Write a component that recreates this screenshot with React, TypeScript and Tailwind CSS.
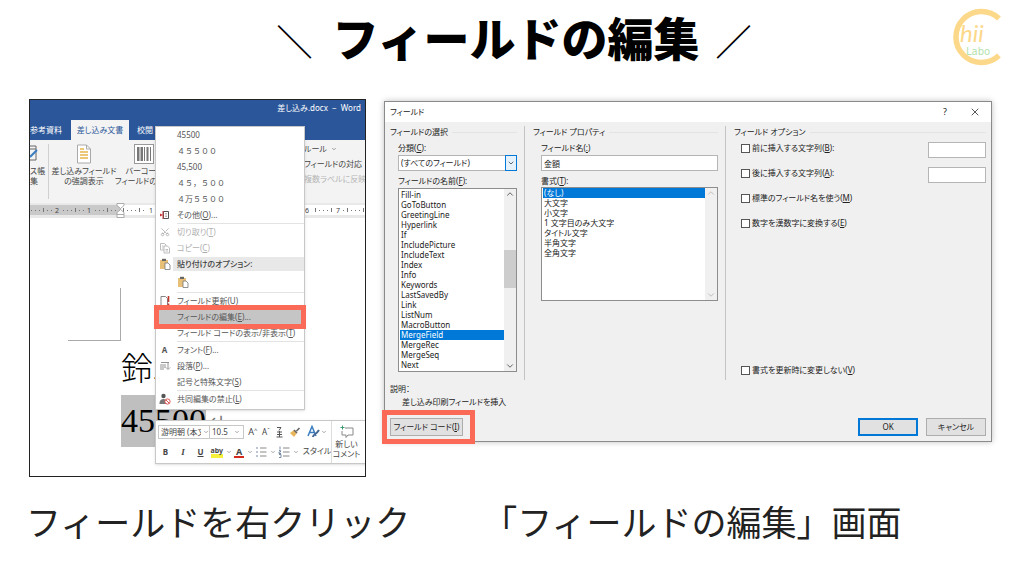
import { useState, type ReactNode } from "react";
import clsx from "clsx";
import { ChevronDown, ChevronUp, Scissors, X } from "lucide-react";

const FIELD_NAMES = [
  "Fill-in",
  "GoToButton",
  "GreetingLine",
  "Hyperlink",
  "If",
  "IncludePicture",
  "IncludeText",
  "Index",
  "Info",
  "Keywords",
  "LastSavedBy",
  "Link",
  "ListNum",
  "MacroButton",
  "MergeField",
  "MergeRec",
  "MergeSeq",
  "Next",
];

const FORMATS = [
  "(なし)",
  "大文字",
  "小文字",
  "1 文字目のみ大文字",
  "タイトル文字",
  "半角文字",
  "全角文字",
];

// "分類(C):" with the access key underlined
function Access({ text, k, end = "" }: { text: string; k: string; end?: string }) {
  return (
    <>
      {text}(<span className="underline underline-offset-1">{k}</span>){end}
    </>
  );
}

function Logo() {
  return (
    <svg viewBox="0 0 60 64" className="absolute right-4 top-1 h-16 w-[60px]" aria-label="Chii Labo">
      <path
        d="M51 14.500 A25.500 25.500 0 1 0 51 51.500"
        fill="none"
        stroke="#fcd88a"
        strokeWidth="5.500"
      />
      <text x="12" y="38" fontFamily="Lato" fontStyle="italic" fontSize="24" fill="#fcd88a">
        hii
      </text>
      <text x="18" y="51" fontFamily="DejaVu Sans" fontSize="10" fill="#b5e2ad">
        Labo
      </text>
    </svg>
  );
}

function ClipboardIcon() {
  return (
    <svg viewBox="0 0 12 12" className="size-3">
      <rect x="1" y="2" width="8" height="9" fill="#e8bf76" />
      <rect x="3" y="0.8" width="4" height="2.2" fill="#666" />
      <path d="M6 5h3l2 2v4.5H6z" fill="#fff" stroke="#777" strokeWidth="0.8" />
    </svg>
  );
}

function CopyIcon() {
  return (
    <svg viewBox="0 0 12 12" className="size-3" fill="#fff" stroke="#b5b5b5" strokeWidth="0.9">
      <path d="M1.5 1.5h4l1.5 1.5v5h-5.500z" />
      <path d="M5 4h3.500l2 2v5h-5.500z" />
      <path d="M3 4h1.500M3 6h1.500M6.500 7.500h2.500M6.500 9h2.500" />
    </svg>
  );
}

function OtherIcon() {
  return (
    <svg viewBox="0 0 12 12" className="size-3" fill="none">
      <path d="M4.500 2.500h5v7h-5z" stroke="#555" />
      <path d="M6 4.500h2M6 6h2M6 7.500h2" stroke="#999" strokeWidth="0.7" />
      <path d="M1 4.500l3 1.500-3 1.500z" fill="#c33" />
      <path d="M4 2v8" stroke="#b33" />
    </svg>
  );
}

function UpdateIcon() {
  return (
    <svg viewBox="0 0 12 12" className="size-3" fill="none">
      <path d="M2 11V1.500h4.500l2 2V11" stroke="#777" strokeWidth="0.9" />
      <path d="M9.500 1v6M9.500 8.500v1.500" stroke="#c0392b" strokeWidth="1.600" />
    </svg>
  );
}

function ParagraphIcon() {
  return (
    <svg viewBox="0 0 12 12" className="size-3" fill="none" stroke="#888" strokeWidth="0.9">
      <path d="M2 2.500h8M1 5h6M1 7h6M1 9h4M9 2.500v6M7 7.500l2 2 2-2" />
    </svg>
  );
}

function BlockUserIcon() {
  return (
    <svg viewBox="0 0 12 12" className="size-3">
      <circle cx="4.500" cy="3" r="2.200" fill="#555" />
      <path d="M0.500 10c0-5 7-5 7.500-1v2H0.500z" fill="#777" />
      <circle cx="8.500" cy="8.500" r="2.600" fill="#fff" stroke="#d9534f" />
      <path d="M6.800 6.800l3.400 3.400" stroke="#d9534f" />
    </svg>
  );
}

function MenuItem({
  icon,
  disabled,
  active,
  wide,
  children,
}: {
  icon?: ReactNode;
  disabled?: boolean;
  active?: boolean;
  wide?: boolean;
  children: ReactNode;
}) {
  return (
    <button
      role="menuitem"
      disabled={disabled}
      className={clsx(
        "flex h-4 w-full items-center whitespace-nowrap text-left",
        disabled ? "text-[#b0b0b0]" : "text-[#555]",
        active && "bg-[#c5c5c5] text-[#333]",
        wide && "[font-feature-settings:normal]",
      )}
    >
      <span className="flex w-[21px] shrink-0 justify-center pr-1">{icon}</span>
      {children}
    </button>
  );
}

function Separator() {
  return <div className="ml-[21px] h-px bg-[#e3e3e3]" />;
}

function ContextMenu() {
  return (
    <div
      role="menu"
      className="absolute left-[125px] top-[26px] w-[150px] border border-[#c8c8c8] bg-white pb-0.5 text-[8px] shadow-sm"
    >
      <MenuItem>45500</MenuItem>
      <MenuItem wide>４５５００</MenuItem>
      <MenuItem>45,500</MenuItem>
      <MenuItem wide>４５，５００</MenuItem>
      <MenuItem wide>４万５５００</MenuItem>
      <MenuItem icon={<OtherIcon />}>
        <Access text="その他" k="O" end="..." />
      </MenuItem>
      <Separator />
      <MenuItem disabled icon={<Scissors className="size-2.5 -rotate-90" />}>
        <Access text="切り取り" k="T" />
      </MenuItem>
      <MenuItem disabled icon={<CopyIcon />}>
        <Access text="コピー" k="C" />
      </MenuItem>
      <div className="flex h-4 items-center">
        <span className="flex w-[17px] justify-center">
          <ClipboardIcon />
        </span>
        <span className="flex h-3.5 flex-1 items-center bg-[#e8e8e8] pl-1 font-medium text-[#444]">
          貼り付けのオプション:
        </span>
      </div>
      <button aria-label="貼り付け" className="flex h-5 items-center pl-[21px]">
        <ClipboardIcon />
      </button>
      <Separator />
      <MenuItem icon={<UpdateIcon />}>
        <Access text="フィールド更新" k="U" />
      </MenuItem>
      <div className="relative">
        <MenuItem active>
          <Access text="フィールドの編集" k="E" end="..." />
        </MenuItem>
        <span className="pointer-events-none absolute -inset-x-0.5 -inset-y-1 border-[5px] border-[#fb6a57]" />
      </div>
      <MenuItem>
        <Access text="フィールド コードの表示/非表示" k="T" />
      </MenuItem>
      <Separator />
      <MenuItem icon={<b>A</b>}>
        <Access text="フォント" k="F" end="..." />
      </MenuItem>
      <MenuItem icon={<ParagraphIcon />}>
        <Access text="段落" k="P" end="..." />
      </MenuItem>
      <MenuItem>
        <Access text="記号と特殊文字" k="S" />
      </MenuItem>
      <Separator />
      <MenuItem icon={<BlockUserIcon />}>
        <Access text="共同編集の禁止" k="L" />
      </MenuItem>
    </div>
  );
}

function ListIcon({ numbered }: { numbered?: boolean }) {
  return (
    <svg viewBox="0 0 12 12" className="size-3" stroke="#888" fill="none">
      <path d="M5 2h6.500M5 6h6.500M5 10h6.500" />
      <path
        d={numbered ? "M2 0.500v3M1 4.500h1.500v1.500h-1.500v1.500h2M1 8.500h2v3h-2" : "M1 2h2M1 6h2M1 10h2"}
        stroke="#7a8ba5"
      />
    </svg>
  );
}

function MiniToolbar() {
  const chevron = <ChevronDown className="size-1.5 text-[#555]" />;
  return (
    <div className="absolute left-[125px] -right-1 top-[320px] flex h-11 border border-[#c8c8c8] bg-white text-[8px] text-[#444] shadow-sm">
      <div className="flex w-[147px] shrink-0 flex-col justify-between pb-1 pl-0.5 pt-1">
        <div className="flex items-center">
          <div className="relative flex items-center">
            <select
              aria-label="フォント"
              className="h-3.5 w-[52px] appearance-none border border-[#c8c8c8] pl-0.5"
            >
              <option>游明朝 (本文</option>
            </select>
            <span className="absolute right-px bg-white py-0.5 pl-0.5">{chevron}</span>
          </div>
          <div className="relative flex items-center">
            <select
              aria-label="フォント サイズ"
              className="h-3.5 w-[34px] appearance-none border border-l-0 border-[#c8c8c8] pl-0.5"
            >
              <option>10.5</option>
            </select>
            <span className="absolute right-1">{chevron}</span>
          </div>
          <div className="flex flex-1 items-center justify-around pl-0.5">
            <button className="text-[9px]">A<sup className="text-[6px]">^</sup></button>
            <button className="text-[8px]">A<sup className="text-[6px]">ˇ</sup></button>
            <button aria-label="ルビ">
              <svg viewBox="0 0 10 12" className="h-3 w-2.5" fill="none" stroke="#555">
                <path d="M3 1.500h4L5 4.500M3 6h5M3 8.500h5M5.500 5v6M2.500 11h6" />
              </svg>
            </button>
            <button aria-label="書式のコピー">
              <svg viewBox="0 0 12 12" className="size-3">
                <path d="M1 7l4-3 3 3-3 4z" fill="#e8b55c" />
                <path d="M5 4l3 3M7.500 5l3-3" stroke="#666" strokeWidth="1.600" />
              </svg>
            </button>
          </div>
        </div>
        <div className="flex items-center justify-between pr-1">
          <button className="w-[15px] font-bold">B</button>
          <button className="w-[15px] font-['Liberation_Serif'] text-[9px] font-bold italic">I</button>
          <button className="w-[15px] font-bold underline">U</button>
          <button className="border-b-4 border-[#f6f03a] text-[7px] font-bold leading-[7px]">aby</button>
          {chevron}
          <button className="border-b-2 border-[#d42a1c] px-0.5 text-[9px] font-bold leading-[9px]">A</button>
          {chevron}
          <button aria-label="箇条書き"><ListIcon /></button>
          {chevron}
          <button aria-label="段落番号"><ListIcon numbered /></button>
          {chevron}
        </div>
      </div>
      <button className="flex w-7 shrink-0 flex-col items-center justify-between whitespace-nowrap pb-1.5 pt-1">
        <span className="flex items-center">
          <svg viewBox="0 0 14 14" className="size-3.5" fill="none">
            <path d="M1 11L5 1.500L9 11M2.500 7.500h5" stroke="#3b7dc0" strokeWidth="1.500" />
            <path d="M6 12c0-3 3-2 6-7" stroke="#44688f" strokeWidth="2" />
          </svg>
          {chevron}
        </span>
        スタイル
      </button>
      <button className="flex w-[30px] shrink-0 flex-col items-center whitespace-nowrap border-l border-[#ddd] pt-1 leading-[10px]">
        <svg viewBox="0 0 14 14" className="size-3.5 shrink-0" fill="none">
          <path d="M5 3h8v7H8l-2 2.500V10H2V6" stroke="#888" />
          <path d="M2.500 0.500v4M0.500 2.500h4" stroke="#3d9a6c" />
        </svg>
        <span>
          新しい
          <br />
          コメント
        </span>
      </button>
    </div>
  );
}

const RULER = [
  { x: 27, label: "2" },
  { x: 59, label: "1" },
  { x: 121, label: "1" },
  { x: 277, label: "6" },
  { x: 308, label: "7" },
];

function Ruler() {
  return (
    <svg className="block h-[15px] w-full" aria-hidden="true">
      <rect y="2" width="91" height="10" fill="#c9c9c9" />
      <rect x="91" y="2" width="400" height="10" fill="#fff" />
      {Array.from({ length: 90 }, (_, i) => 1 + i * 4).map((x, i) =>
        RULER.some((r) => Math.abs(r.x - x) < 5) ? null : (
          <rect key={x} x={x} y={i % 4 === 3 ? 5 : 7} width="1" height={i % 4 === 3 ? 4 : 1} fill="#777" />
        ),
      )}
      {RULER.map((r) => (
        <text key={r.x} x={r.x} y="10" textAnchor="middle" fontSize="7" fill="#444">
          {r.label}
        </text>
      ))}
      <path d="M87 0.500h7v2l-3.500 3-3.500-3zM87 14.500v-5l3.500-3 3.500 3v5zM87 11.500h7" fill="#fff" stroke="#999" strokeWidth="0.800" />
    </svg>
  );
}

function WordWindow() {
  return (
    <section className="relative overflow-hidden border border-[#222] bg-white text-[8px] text-[#444]">
      <div className="flex h-10 flex-col justify-between bg-[#2b579a] text-white">
        <p className="pr-1 pt-0.5 text-right leading-3">差し込み.docx&nbsp; −&nbsp; Word</p>
        <nav className="flex h-5 items-center whitespace-nowrap">
          <button className="w-[41px] text-left">参考資料</button>
          <button className="h-full w-[58px] bg-[#f3f3f3] text-[#2b579a]">差し込み文書</button>
          <button className="pl-2">校閲</button>
        </nav>
      </div>

      <div className="flex h-[63px] whitespace-nowrap bg-[#f3f3f3] leading-[10px]">
        <button className="my-1 flex w-[19px] flex-col items-start border-r border-[#d0d0d0] text-left">
          <svg viewBox="0 0 10 20" className="h-5 w-2.5" fill="none">
            <path d="M0 2h6v14H0M0 5h6" stroke="#666" />
            <path d="M0 13l7-7" stroke="#3b7dc0" strokeWidth="2" />
          </svg>
          <span className="pt-0.5">
            ス帳
            <br />集
          </span>
        </button>
        <button className="flex w-[70px] flex-col items-center pt-1">
          <svg viewBox="0 0 16 20" className="h-5 w-4" fill="none">
            <path d="M1.500 1h9l4 4v14h-13z" fill="#fff" stroke="#aaa" />
            <path d="M10.500 1v4h4" stroke="#aaa" />
            <path d="M4 5h4M4 8h8M4 11h8M4 14h8" stroke="#e8b84b" strokeWidth="1.500" />
          </svg>
          <span className="pt-0.5">
            差し込みフィールド
            <br />
            の強調表示
          </span>
        </button>
        <button className="flex w-[50px] flex-col items-center pt-1">
          <svg viewBox="0 0 20 20" className="size-5">
            <rect x="0.500" y="0.500" width="19" height="19" fill="#fff" stroke="#999" />
            <path d="M4 3v14M8 3v14M13.500 3v14" stroke="#777" strokeWidth="2" />
            <path d="M6 3v14M10.500 3v14M16.500 3v14" stroke="#777" />
          </svg>
          <span className="pt-0.5">
            バーコード
            <br />
            フィールドの挿入
          </span>
        </button>
        <div className="ml-auto flex w-[61px] flex-col items-start gap-[5px] pt-1">
          <button className="flex items-center gap-1">
            ルール <ChevronDown className="size-1.5" />
          </button>
          <button>フィールドの対応</button>
          <button disabled className="text-[#b5b5b5]">
            複数ラベルに反映
          </button>
        </div>
      </div>

      <div className="bg-[#e9e9e9]">
        <Ruler />
      </div>

      <div className="h-[258px] pl-[38px] pt-[70px] text-black">
        <div className="h-[53px] w-[53px] border-b border-r border-[#aaa]" />
        <div className="pl-[53px] font-['Liberation_Serif','Noto_Sans_CJK_JP',serif] font-light">
          <p className="pt-2 text-[32px] leading-10">鈴木</p>
          <p className="mt-1.5 flex items-center whitespace-nowrap text-[34px] leading-[52px]">
            <span className="bg-[#bfbfbf]">45500</span>
            <span className="pl-1 text-lg text-[#777]">↵</span>
          </p>
        </div>
      </div>

      <ContextMenu />
      <MiniToolbar />
    </section>
  );
}

function GroupTitle({ children }: { children: ReactNode }) {
  return (
    <h3 className="flex h-3 items-center gap-1 whitespace-nowrap">
      {children}
      <span className="h-px flex-1 bg-[#e3e3e3]" />
    </h3>
  );
}

function ListBox({
  label,
  items,
  selected,
  onSelect,
  className,
  thumb,
}: {
  label: string;
  items: string[];
  selected: string;
  onSelect: (item: string) => void;
  className?: string;
  thumb?: boolean;
}) {
  return (
    <div className={clsx("flex border border-[#8d8d8d] bg-white", className)}>
      <ul role="listbox" aria-label={label} className={clsx("flex-1 pl-px", thumb && "pt-px")}>
        {items.map((item) => (
          <li
            key={item}
            role="option"
            aria-selected={item === selected}
            onClick={() => onSelect(item)}
            className={clsx(
              "h-[10px] whitespace-nowrap pl-px leading-[10px]",
              item === selected && "bg-[#0078d7] text-white",
            )}
          >
            {item}
          </li>
        ))}
      </ul>
      <div className="flex w-3 flex-col items-center bg-[#f0f0f0]">
        <ChevronUp className={clsx("size-2.5", thumb ? "text-[#444]" : "text-[#b5b5b5]")} />
        <span className="flex-[51]" />
        {thumb && <span className="w-full flex-[38] bg-[#cdcdcd]" />}
        <span className="flex-[73]" />
        <ChevronDown className={clsx("size-2.5", thumb ? "text-[#444]" : "text-[#b5b5b5]")} />
      </div>
    </div>
  );
}

function Option({ text, k, end, input }: { text: string; k: string; end?: string; input?: boolean }) {
  return (
    <div className="flex items-start justify-between">
      <label className="flex h-5 items-center gap-0.5 whitespace-nowrap">
        <input type="checkbox" className="size-[9px] appearance-none border border-[#555] bg-white" />
        <span>
          <Access text={text} k={k} end={end} />
        </span>
      </label>
      {input && <input aria-label={text} className="mt-1 h-4 w-[58px] border border-[#b5b5b5] bg-white" />}
    </div>
  );
}

function FieldDialog() {
  const [field, setField] = useState("MergeField");
  const [format, setFormat] = useState("(なし)");

  return (
    <section
      role="dialog"
      aria-label="フィールド"
      className="mt-0.5 border border-[#8a8a8a] bg-[#f0f0f0] text-[8px] text-[#222] shadow-[0_0_6px_rgba(0,0,0,0.25)]"
    >
      <div className="flex h-5 items-center bg-white pl-[5px] pr-0.5">
        <h2 className="flex-1">フィールド</h2>
        <button className="w-8 text-[9px]">?</button>
        <button aria-label="閉じる" className="flex w-7 justify-center">
          <X className="size-3" strokeWidth={1.5} />
        </button>
      </div>

      <div className="flex pl-[5px] pr-[5px] pt-1">
        <div className="w-[135px] border-r border-[#c4c4c4] pb-2 pr-[7px]">
          <GroupTitle>フィールドの選択</GroupTitle>
          <div className="pl-2">
            <label htmlFor="category" className="mt-1 block leading-3">
              <Access text="分類" k="C" end=":" />
            </label>
            <div className="relative mt-px">
              <select
                id="category"
                className="block h-4 w-full appearance-none border border-[#b5b5b5] bg-white pl-0.5"
              >
                <option>(すべてのフィールド)</option>
              </select>
              <span className="pointer-events-none absolute inset-y-0 right-0 flex w-3 items-center justify-center border border-[#0078d7] bg-[#e5f1fb]">
                <ChevronDown className="size-2" />
              </span>
            </div>
            <p className="mb-px mt-1 whitespace-nowrap leading-3">
              <Access text="フィールドの名前" k="F" end=":" />
            </p>
            <ListBox
              label="フィールドの名前"
              items={FIELD_NAMES}
              selected={field}
              onSelect={setField}
              className="h-[184px]"
              thumb
            />
          </div>
        </div>

        <div className="w-[201px] border-r border-[#c4c4c4] pl-2 pr-[7px]">
          <GroupTitle>フィールド プロパティ</GroupTitle>
          <div className="pl-2">
            <label htmlFor="field-name" className="mt-1 block leading-3">
              <Access text="フィールド名" k=":" />
            </label>
            <input
              id="field-name"
              defaultValue="金額"
              className="mt-px block h-4 w-full border border-[#b5b5b5] bg-white pl-0.5"
            />
            <p className="mt-1 leading-3">
              <Access text="書式" k="T" end=":" />
            </p>
            <ListBox
              label="書式"
              items={FORMATS}
              selected={format}
              onSelect={setFormat}
              className="h-[114px]"
            />
          </div>
        </div>

        <div className="flex flex-1 flex-col pl-2">
          <GroupTitle>フィールド オプション</GroupTitle>
          <div className="flex flex-1 flex-col gap-[5px] pl-[7px]">
            <Option text="前に挿入する文字列" k="B" end=":" input />
            <Option text="後に挿入する文字列" k="A" end=":" input />
            <Option text="標準のフィールド名を使う" k="M" />
            <Option text="数字を漢数字に変換する" k="E" />
            <div className="mt-auto">
              <Option text="書式を更新時に変更しない" k="V" />
            </div>
          </div>
        </div>
      </div>

      <div className="pl-[5px] pt-0.5 leading-[13px]">
        <p>説明：</p>
        <p className="pl-3">差し込み印刷フィールドを挿入</p>
      </div>

      <div className="flex gap-2 px-[5px] pb-[5px] pt-2.5">
        <div className="relative mr-auto">
          <button className="h-[18px] w-[73px] border border-[#adadad] bg-[#e1e1e1]">
            <Access text="フィールド コード" k="I" />
          </button>
          <span className="pointer-events-none absolute -bottom-2 -left-2 -right-3 -top-2 border-[5px] border-[#fb6a57]" />
        </div>
        <button className="h-[18px] w-[60px] border-2 border-[#0078d7] bg-[#e1e1e1]">OK</button>
        <button className="h-[18px] w-[60px] border border-[#adadad] bg-[#e1e1e1]">キャンセル</button>
      </div>
    </section>
  );
}

export default function App() {
  return (
    <main className="relative min-h-screen overflow-hidden bg-white font-['Noto_Sans','Noto_Sans_CJK_JP',sans-serif] text-[#222] [font-feature-settings:'palt']">
      <header className="flex h-[99px] items-start justify-center gap-4 pl-1 pt-1 font-['Noto_Sans_CJK_JP',sans-serif] text-black [font-feature-settings:normal]">
        <span className="pr-1 text-4xl font-medium leading-[72px]">＼</span>
        <h1 className="whitespace-nowrap text-[46px] font-black leading-[64px]">フィールドの編集</h1>
        <span className="text-4xl font-medium leading-[72px]">／</span>
      </header>
      <Logo />

      <div className="grid grid-cols-[337fr_608fr] items-start gap-[18px] pl-[29px] pr-8">
        <WordWindow />
        <FieldDialog />
      </div>

      <div className="flex gap-[72px] whitespace-nowrap pl-[26px] pt-[18px] font-['Noto_Sans_CJK_JP',sans-serif] text-[35px] leading-[52px] [font-feature-settings:normal]">
        <p>フィールドを右クリック</p>
        <p>「フィールドの編集」画面</p>
      </div>
    </main>
  );
}
